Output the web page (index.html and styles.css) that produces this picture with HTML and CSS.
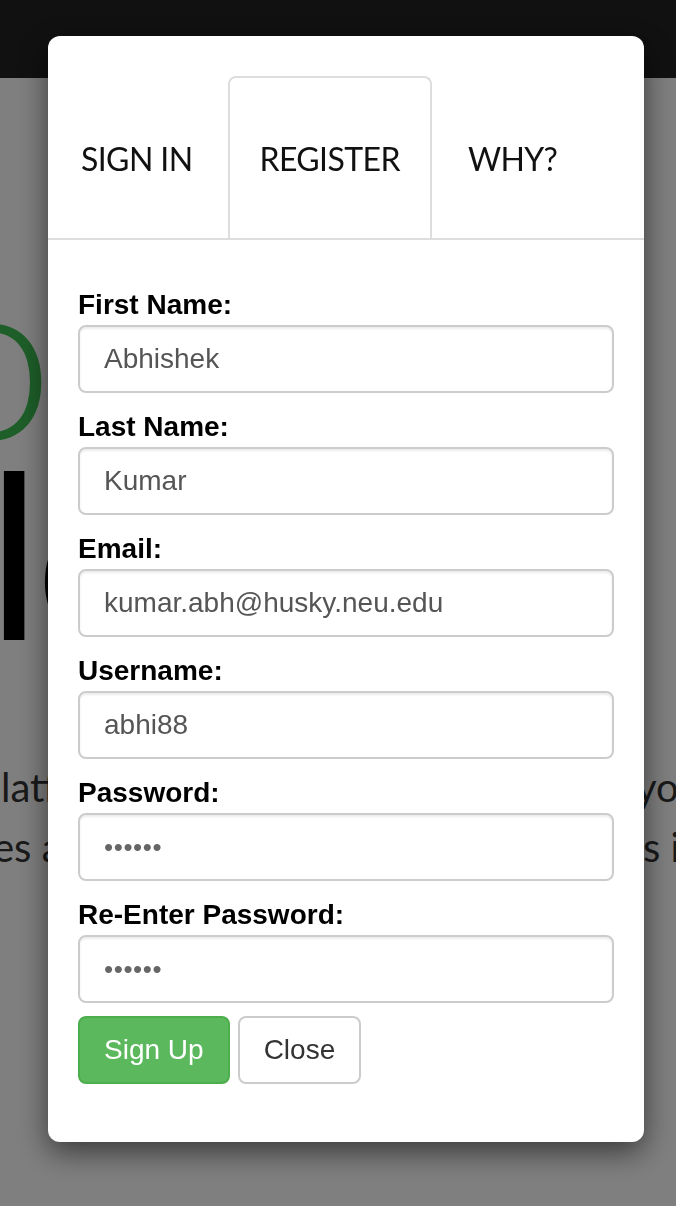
FILE: index.html
```html
<!DOCTYPE html>
<html lang="en">
<head>
<meta charset="utf-8">
<title>Register</title>
<link rel="stylesheet" href="styles.css">
</head>
<body>
<div class="navbar"></div>
<main class="page">
  <div class="hero-green">o</div>
  <div class="hero-black">lo</div>
  <div class="para">
    <div class="para-row"><span class="para-left">latform provides</span><span class="para-right">you</span></div>
    <div class="para-row"><span class="para-left para-left-cut">es and profile</span><span class="para-right para-right-shift">s in</span></div>
  </div>
</main>
<div class="backdrop"></div>
<div class="modal-wrap">
  <div class="modal">
    <div class="modal-header">
      <ul class="tabs">
        <li class="tab">SIGN IN</li>
        <li class="tab tab-active">REGISTER</li>
        <li class="tab">WHY?</li>
      </ul>
    </div>
    <form class="modal-body">
      <div class="group">
        <label class="label" for="fn">First Name:</label>
        <input class="input" id="fn" type="text" value="Abhishek">
      </div>
      <div class="group">
        <label class="label" for="ln">Last Name:</label>
        <input class="input" id="ln" type="text" value="Kumar">
      </div>
      <div class="group">
        <label class="label" for="em">Email:</label>
        <input class="input" id="em" type="text" value="kumar.abh@husky.neu.edu">
      </div>
      <div class="group">
        <label class="label" for="un">Username:</label>
        <input class="input" id="un" type="text" value="abhi88">
      </div>
      <div class="group">
        <label class="label" for="pw">Password:</label>
        <input class="input input-pw" id="pw" type="password" value="secret">
      </div>
      <div class="group">
        <label class="label" for="pw2">Re-Enter Password:</label>
        <input class="input input-pw" id="pw2" type="password" value="secret">
      </div>
      <div class="actions">
        <button type="button" class="btn btn-success">Sign Up</button>
        <button type="button" class="btn btn-default">Close</button>
      </div>
    </form>
  </div>
</div>
</body>
</html>
```
FILE: styles.css
```css
* { box-sizing: border-box; }
html, body { margin: 0; padding: 0; }
body {
  width: 676px;
  height: 1206px;
  overflow: hidden;
  background: #fff;
  font-family: "Lato", "Open Sans", sans-serif;
}
.navbar {
  height: 78px;
  background: #222;
}
.page {
  padding-top: 173px;
  overflow: hidden;
}
.hero-green {
  font-family: "Lato", sans-serif;
  font-weight: 300;
  font-size: 230px;
  line-height: 200px;
  height: 200px;
  color: #3cbc52;
  margin-left: -75px;
  white-space: nowrap;
}
.hero-black {
  font-family: "Lato", sans-serif;
  font-weight: 400;
  font-size: 230px;
  line-height: 200px;
  height: 200px;
  color: #000;
  margin-left: -13px;
  letter-spacing: -6px;
  white-space: nowrap;
}
.para {
  margin-top: 106px;
  font-family: "Lato", sans-serif;
  font-size: 40px;
  line-height: 60px;
  color: #333;
}
.para-row {
  display: grid;
  grid-template-columns: 636px 1fr;
  white-space: nowrap;
  overflow: hidden;
}
.para-left { padding-left: 1px; overflow: hidden; }
.para-left-cut { margin-left: -8px; }
.para-right { overflow: hidden; }
.para-right-shift { padding-left: 7px; }

.backdrop {
  position: fixed;
  inset: 0;
  background: rgba(0, 0, 0, 0.5);
}
.modal-wrap {
  position: fixed;
  inset: 0;
  padding: 36px 0 0 48px;
}
.modal {
  width: 596px;
  background: #fff;
  border-radius: 12px;
  box-shadow: 0 10px 30px rgba(0, 0, 0, 0.55);
  overflow: hidden;
}
.modal-header {
  padding-top: 40px;
}
.tabs {
  list-style: none;
  margin: 0;
  padding: 0;
  display: flex;
  border-bottom: 2px solid #ddd;
}
.tab {
  font-family: "Lato", sans-serif;
  font-size: 32px;
  letter-spacing: -0.6px;
  line-height: 47px;
  color: #111;
  padding: 57px 30px 56px;
  border: 2px solid transparent;
  border-bottom: 0;
  border-radius: 8px 8px 0 0;
  margin-right: 4px;
}
.tab:first-child { padding-left: 31px; padding-right: 29px; }
.tab-active {
  border-color: #ddd;
  padding-left: 30px;
  padding-right: 30px;
}
.modal-body {
  margin: 0;
  padding: 42px 30px 58px;
  font-family: "Liberation Sans", Arial, sans-serif;
}
.group {
  margin-bottom: 11px;
}
.label {
  display: block;
  font-weight: 700;
  font-size: 28px;
  line-height: 40px;
  color: #000;
  padding-top: 3px;
  margin-bottom: 0;
}
.input {
  display: block;
  width: 100%;
  height: 68px;
  padding: 0 24px;
  font-family: "Liberation Sans", Arial, sans-serif;
  font-size: 28px;
  color: #555;
  background: #fff;
  border: 2px solid #ccc;
  border-radius: 8px;
  box-shadow: inset 0 2px 2px rgba(0, 0, 0, 0.075);
  outline: none;
}
.input-pw {
  color: #666;
  font-size: 26px;
  letter-spacing: 0.6px;
}
.actions {
  display: flex;
  gap: 8px;
  padding-top: 2px;
}
.btn {
  font-family: "Liberation Sans", Arial, sans-serif;
  font-size: 28px;
  line-height: 40px;
  padding: 12px 24px;
  border-radius: 8px;
  border: 2px solid;
  cursor: pointer;
}
.btn-success {
  background: #5cb85c;
  border-color: #4cae4c;
  color: #fff;
}
.btn-default {
  background: #fff;
  border-color: #ccc;
  color: #333;
}
```
